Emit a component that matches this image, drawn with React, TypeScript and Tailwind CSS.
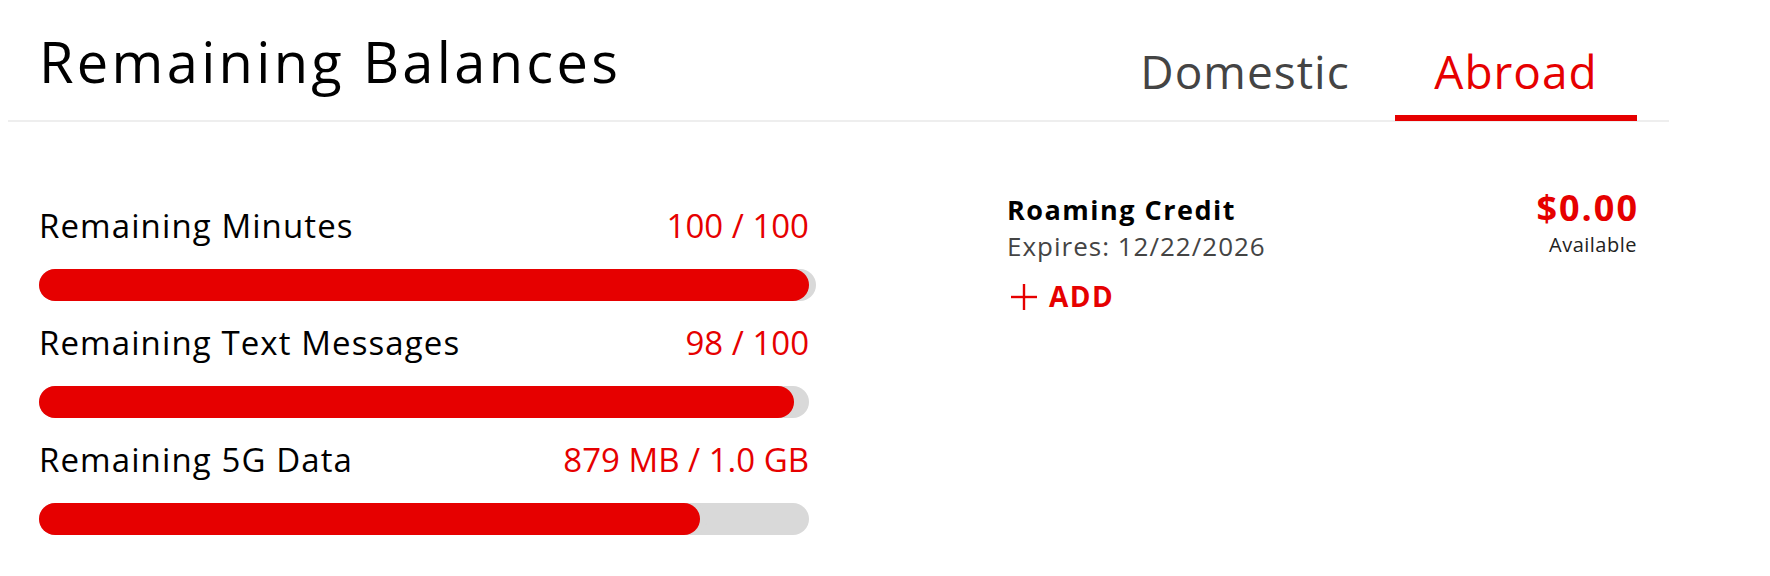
import React from 'react'

const rows = [
  { label: 'Remaining Minutes', value: '100 / 100', pct: 100 },
  { label: 'Remaining Text Messages', value: '98 / 100', pct: 98 },
  { label: 'Remaining 5G Data', value: '879 MB / 1.0 GB', pct: (879 / 1024) * 100 },
]

function PlusIcon() {
  return (
    <svg width="26" height="26" viewBox="0 0 26 26" fill="none" stroke="#e60000" strokeWidth="2.4">
      <line x1="13" y1="0" x2="13" y2="26" />
      <line x1="0" y1="13" x2="26" y2="13" />
    </svg>
  )
}

export default function App() {
  return (
    <div className="w-[1770px] h-[576px] bg-white font-['Open_Sans',sans-serif] text-[#111] overflow-hidden">
      {/* Header */}
      <div className="ml-[8px] w-[1661px] flex justify-between border-b-2 border-[#eeeeee] pl-[31px] pr-[32px]">
        <h1 className="mt-[33px] text-[56px] leading-[56px] font-normal tracking-[3.3px] text-black">Remaining Balances</h1>
        <div className="mt-[48px] -mb-px flex gap-[6px]">
          <button className="w-[288px] pb-[21px] border-b-[6px] border-transparent text-[46px] leading-[46px] tracking-[1px] text-[#444]">
            Domestic
          </button>
          <button className="w-[242px] pb-[21px] border-b-[6px] border-[#e60000] text-[46px] leading-[46px] tracking-[1px] text-[#e60000]">
            Abroad
          </button>
        </div>
      </div>

      {/* Body */}
      <div className="flex pl-[39px] pt-[69px]">
        <div className="w-[777px] pt-[18px] flex flex-col gap-[25px]">
          {rows.map((r) => (
            <div key={r.label}>
              <div className="w-[770px] flex justify-between text-[33px] leading-[33px]">
                <span className="tracking-[1.1px] text-black">{r.label}</span>
                <span className="text-[#e60000]">{r.value}</span>
              </div>
              <div className="mt-[27px] h-[32px] w-[770px] rounded-full bg-[#d9d9d9]">
                <div
                  className="h-full rounded-full bg-[#e60000] shadow-[7px_0_0_0_#d9d9d9]"
                  style={{ width: `${r.pct}%` }}
                />
              </div>
            </div>
          ))}
        </div>

        <div className="ml-[191px] w-[630px] flex justify-between">
          <div>
            <div className="text-[27px] leading-[37px] font-bold tracking-[1.5px] text-black">Roaming Credit</div>
            <div className="text-[26px] leading-[37px] tracking-[1px] text-[#444]">Expires: 12/22/2026</div>
            <button className="mt-[13px] flex items-center gap-[12px] text-[28px] leading-[37px] font-bold tracking-[1.5px] text-[#e60000]">
              <span className="ml-[4px]"><PlusIcon /></span>
              ADD
            </button>
          </div>
          <div className="text-right">
            <div className="-mt-[1px] -mr-[2px] text-[36px] leading-[36px] font-bold tracking-[2px] text-[#e60000]">$0.00</div>
            <div className="mt-[9px] text-[20px] leading-[20px] tracking-[0.5px] text-[#222]">Available</div>
          </div>
        </div>
      </div>
    </div>
  )
}
